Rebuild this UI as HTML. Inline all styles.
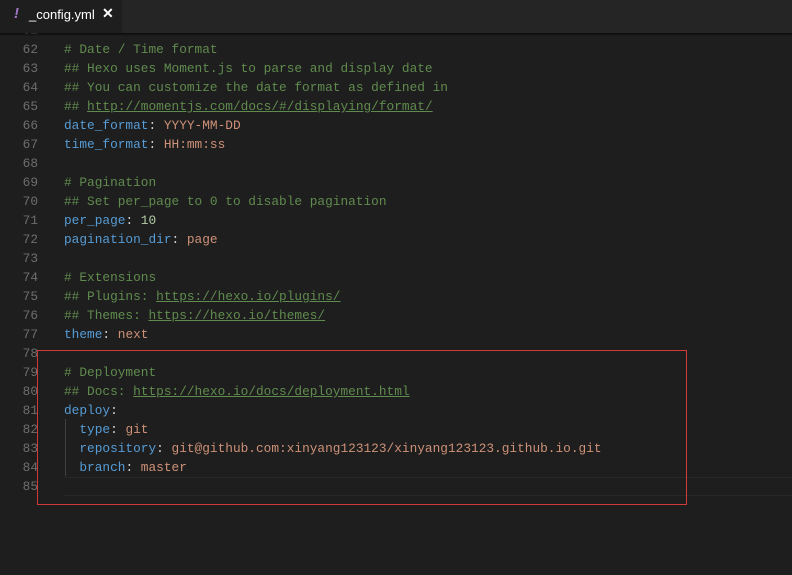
<!DOCTYPE html>
<html><head><style>
body{margin:0;width:792px;height:575px;background:#1e1e1e;overflow:hidden;font-family:"Liberation Mono",monospace;}
.tabs{position:absolute;left:0;top:0;width:792px;height:33px;background:#252526;z-index:5;}
.tab{position:absolute;left:0;top:0;width:122px;height:33px;background:#1e1e1e;font-family:"Liberation Sans",sans-serif;font-size:13px;color:#fff;}
.ln{position:absolute;left:0;width:38px;text-align:right;color:#6e6e6e;font-size:12.8px;line-height:19px;}
.code{position:absolute;left:64px;color:#d4d4d4;font-size:12.8px;line-height:19px;white-space:pre;}
.c{color:#608b4e}.k{color:#569cd6}.s{color:#ce9178}.n{color:#b5cea8}.u{text-decoration:underline}
</style></head><body>
<div class="tabs"><div class="tab">
<span style="position:absolute;left:14px;top:5px;color:#a074c4;font-weight:bold;font-style:italic;font-size:15px">!</span>
<span style="position:absolute;left:29px;top:7px">_config.yml</span>
<span style="position:absolute;left:102px;top:5px;font-size:14px;font-weight:bold">✕</span>
</div></div>
<div style="position:absolute;left:0;top:33px;width:792px;height:3px;background:linear-gradient(#000a,#0000);z-index:5"></div>
<div class="ln" style="top:21px">61<br>62<br>63<br>64<br>65<br>66<br>67<br>68<br>69<br>70<br>71<br>72<br>73<br>74<br>75<br>76<br>77<br>78<br>79<br>80<br>81<br>82<br>83<br>84<br>85</div>
<div style="position:absolute;left:64px;top:477px;width:728px;height:17px;border-top:1px solid #282828;border-bottom:1px solid #282828"></div>
<div style="position:absolute;left:65px;top:419px;width:1px;height:57px;background:#404040"></div>
<div class="code" style="top:40px"><span class="c"># Date / Time format
## Hexo uses Moment.js to parse and display date
## You can customize the date format as defined in
## <span class="u">http://momentjs.com/docs/#/displaying/format/</span></span>
<span class="k">date_format</span>: <span class="s">YYYY-MM-DD</span>
<span class="k">time_format</span>: <span class="s">HH:mm:ss</span>

<span class="c"># Pagination
## Set per_page to 0 to disable pagination</span>
<span class="k">per_page</span>: <span class="n">10</span>
<span class="k">pagination_dir</span>: <span class="s">page</span>

<span class="c"># Extensions
## Plugins: <span class="u">https://hexo.io/plugins/</span>
## Themes: <span class="u">https://hexo.io/themes/</span></span>
<span class="k">theme</span>: <span class="s">next</span>

<span class="c"># Deployment
## Docs: <span class="u">https://hexo.io/docs/deployment.html</span></span>
<span class="k">deploy</span>:
  <span class="k">type</span>: <span class="s">git</span>
  <span class="k">repository</span>: <span class="s">git@github.com:xinyang123123/xinyang123123.github.io.git</span>
  <span class="k">branch</span>: <span class="s">master</span>
</div>
<div style="position:absolute;left:37px;top:350px;width:648px;height:153px;border:1px solid #d03a3a"></div>
</body></html>
